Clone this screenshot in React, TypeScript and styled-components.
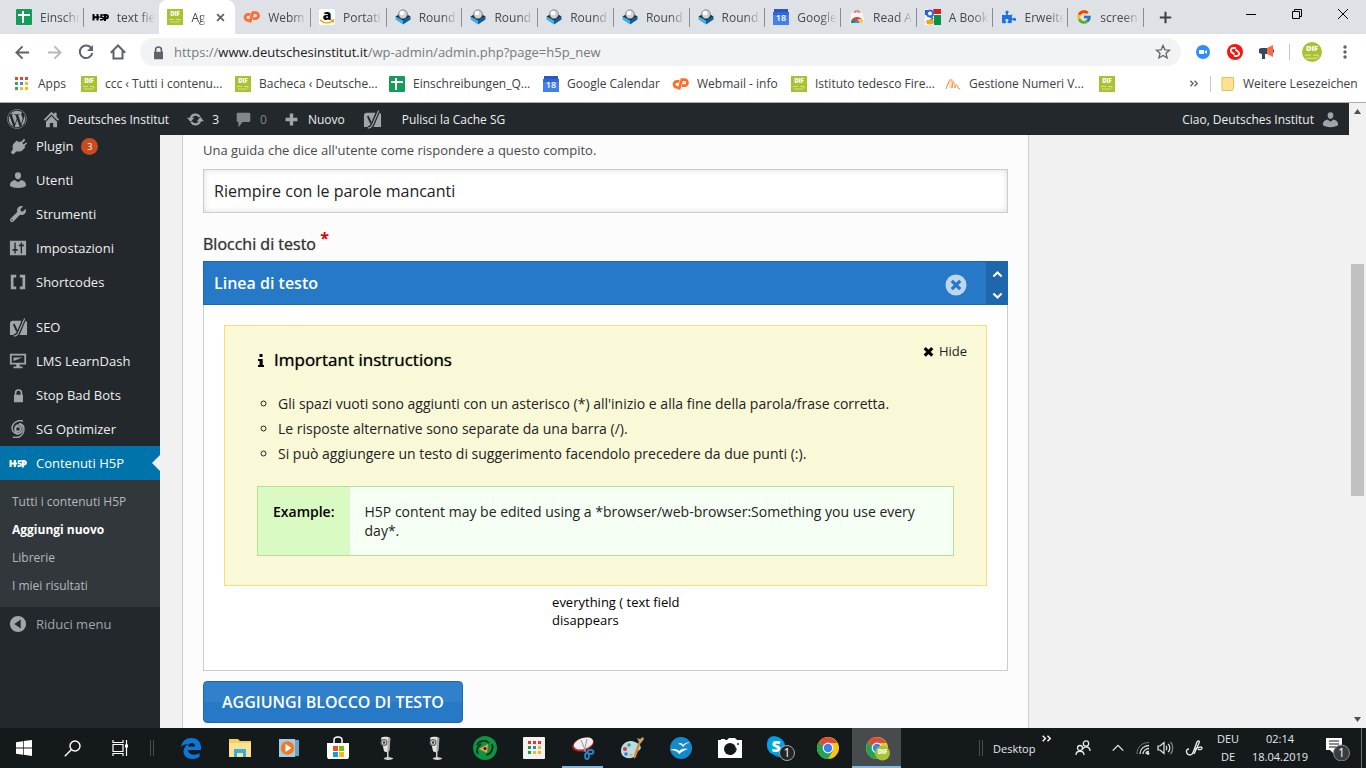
import React from "react";
import styled, { createGlobalStyle, css } from "styled-components";
import { FaWordpress, FaWrench, FaPuzzlePiece } from "react-icons/fa";
import { FcGoogle } from "react-icons/fc";

const ui = `"Open Sans", "Noto Sans", sans-serif`;

const GlobalStyle = createGlobalStyle`
  * { box-sizing: border-box; }
  body { margin: 0; font-family: ${ui}; font-size: 12px; overflow: hidden; }
  button { font: inherit; color: inherit; background: none; border: 0; padding: 0; cursor: pointer; }
  a { color: inherit; text-decoration: none; }
  ul { list-style: none; margin: 0; padding: 0; }
  svg { display: block; flex: none; }
`;

/* ---------- icons ---------- */

const Dif = ({ size = 16, round = false }: { size?: number; round?: boolean }) => (
  <svg width={size} height={size} viewBox="0 0 16 16">
    {round ? <circle cx="8" cy="8" r="8" fill="#a9c22f" /> : <rect width="16" height="16" fill="#a9c22f" />}
    <text x="8" y="7" textAnchor="middle" fontSize="6" fontWeight="800" fill="#fff" fontFamily="Open Sans, sans-serif">DIF</text>
    <path d="M2 10.500h5M9 10.500h4v2M3 13h9" stroke="#dfe8ac" strokeWidth=".8" fill="none" />
  </svg>
);

const Sheet = () => (
  <svg width="16" height="16" viewBox="0 0 16 16">
    <rect width="16" height="16" rx="1" fill="#129d58" />
    <path d="M2 6h12M7 2v12" stroke="#fff" strokeWidth="2" />
  </svg>
);

const H5p = ({ color = "#000", width = 17 }: { color?: string; width?: number }) => (
  <svg width={width} height={width / 2} viewBox="0 0 34 17" fill="none" stroke={color} strokeWidth="4">
    <path d="M3 2v13M11 2v13M3 8.500h12" />
    <path d="M24 4h-6v4.500h2c4 0 4 5 0 5h-4" strokeWidth="3" />
    <path d="M26 16V4h2c5 0 5 6.500 0 6.500h-2" strokeWidth="4" />
  </svg>
);

const Cpanel = () => (
  <svg width="17" height="16" viewBox="0 0 17 16" fill="none" stroke="#ff6c2c" strokeWidth="2.700">
    <path d="M7.500 5.300H5a3 3 0 0 0 0 6h1.500" />
    <path d="M7 13.500 9.800 3.700H12.500a3 3 0 0 1 0 6H10" />
  </svg>
);

const Yoast = () => (
  <svg width="19" height="19" viewBox="0 0 20 20" fill="none">
    <path d="M4 3h13a2 2 0 0 1 2 2v13H1V6a3 3 0 0 1 3-3z" fill="#a0a5aa" />
    <path d="M16.500 0 10 15.500c-1 2.500-2.500 3.500-5 3.500" stroke="#23282d" strokeWidth="4" />
    <path d="M5 6.500 8.500 14" stroke="#23282d" strokeWidth="2" />
    <path d="M16.500 .5 10 15.500c-1 2.500-2.500 3.500-5 3.500" stroke="#a0a5aa" strokeWidth="1.200" />
  </svg>
);

const Amazon = () => (
  <svg width="16" height="16" viewBox="0 0 16 16">
    <rect width="16" height="16" rx="2" fill="#fff" />
    <text x="8" y="11" textAnchor="middle" fontSize="14" fontWeight="800" fill="#000" fontFamily="Open Sans, sans-serif">a</text>
    <path d="M1 11c4 3.500 9 3.500 13 .8M12 11.300l2.600-.3-.6 2.700" stroke="#f90" strokeWidth="1.300" fill="none" />
  </svg>
);

const Roundcube = () => (
  <svg width="16" height="16" viewBox="0 0 16 16">
    <path d="M.5 7.500 8 3l7.500 4.500L8 12z" fill="#1d2a33" />
    <path d="M.5 7.500 8 11.500v4L.5 10.500z" fill="#3fb0ea" />
    <path d="M15.500 7.500 8 11.500v4l7.500-5z" fill="#08609c" />
    <circle cx="8" cy="5.300" r="4.400" fill="#cfd3d6" stroke="#6b7175" strokeWidth=".8" />
    <circle cx="7" cy="4" r="2.300" fill="#fff" />
  </svg>
);

const Calendar = () => (
  <svg width="16" height="16" viewBox="0 0 16 16">
    <path d="M1 0h14v4H1z" fill="#2a56c6" />
    <path d="M0 3h16v13H0z" fill="#4280ef" />
    <path d="M0 3h16v3H0z" fill="#3367d6" />
    <text x="8" y="12" textAnchor="middle" fontSize="9" fontWeight="600" fill="#fff" fontFamily="Open Sans, sans-serif">18</text>
  </svg>
);

const WebStore = () => (
  <svg width="16" height="16" viewBox="0 0 16 16">
    <path d="M2 4h12l1 10H1z" fill="#f4f4f4" />
    <path d="M6 4V2h4v2" stroke="#e44" fill="none" />
    <path d="M2 14c0-8 12-8 12 0z" fill="#db4437" />
    <path d="M2 14c0-2 .5-3 1.500-4L7 14z" fill="#0f9d58" />
    <path d="M14 14c0-2-.5-3-1.500-4H9l-1 4z" fill="#ffcd40" />
    <path d="M5.500 14c0-4 5-4 5 0z" fill="#4285f4" />
  </svg>
);

const OldGoogle = () => (
  <svg width="16" height="16" viewBox="0 0 16 16">
    <rect width="16" height="16" rx="1" fill="#fff" />
    <path d="M8 0h8v5H9z" fill="#e11b1b" />
    <path d="M9 6h7v10H9z" fill="#079247" />
    <path d="M0 1h4v5H0z" fill="#1c5ad4" />
    <circle cx="5" cy="4.500" r="3" fill="#fff" stroke="#2a66dd" strokeWidth="2" />
    <path d="M5 8c4 1 3 3 0 3" stroke="#2a66dd" fill="none" strokeWidth="1.500" />
    <ellipse cx="5" cy="13" rx="4" ry="2.500" fill="#f2a713" />
  </svg>
);

const AppsGrid = () => (
  <svg width="13" height="13" viewBox="0 0 13 13">
    {["#ea4335", "#ea4335", "#ea4335", "#34a853", "#4285f4", "#fbbc05", "#34a853", "#fbbc05", "#fbbc05"].map((c, i) => (
      <rect key={i} x={(i % 3) * 5} y={Math.floor(i / 3) * 5} width="3" height="3" fill={c} />
    ))}
  </svg>
);

const Gestione = () => (
  <svg width="16" height="16" viewBox="0 0 16 16" fill="none" stroke="#f08c2e" strokeWidth="1">
    <path d="M1 13 4 5c2-3 4-1 3 7 0-6 3-8 3 0 0-3 3-5 3 0l2 1" />
    <path d="M5 12V5c0-2 3-2 4 1" stroke="#f6c08c" />
  </svg>
);

const Stroke = ({ d, size = 16, color = "#5f6368", w = 2 }: { d: string; size?: number; color?: string; w?: number }) => (
  <svg width={size} height={size} viewBox="0 0 16 16" fill="none" stroke={color} strokeWidth={w}>
    <path d={d} />
  </svg>
);

const Solid = ({ d, size = 18, color = "#a0a5aa", box = 20 }: { d: string; size?: number; color?: string; box?: number }) => (
  <svg width={size} height={size} viewBox={`0 0 ${box} ${box}`} fill={color} fillRule="evenodd">
    <path d={d} />
  </svg>
);

const personPath = "M10 9.300c-2.100 0-3.400-2-3.400-4.300C6.600 2.700 7.900 1.500 10 1.500s3.400 1.200 3.400 3.500c0 2.300-1.300 4.300-3.400 4.300zM1 16.500c0-4 2-5.700 5.500-6.500l3.500 2.500 3.500-2.500c3.500.8 5.500 2.500 5.500 6.500-2 1.700-5 2.500-9 2.500s-7-.8-9-2.500z";
const lockPath = "M4 9h1V6.500a5 5 0 0 1 10 0V9h1v10H4zM7.200 9h5.600V6.500a2.800 2.800 0 0 0-5.600 0z";
const plugPath = "M13 4.500 16.500 1 18 2.500 14.500 6l1.500 1.500L19 5l1 1.500-3 3 1 1.500-3 3c-2 2-5 2.500-7 1.500l-4.500 4L1 17l2.500-4c-1-2.500-.5-5 1.500-7l3-3 1.500 1.500z";

const ChromeLogo = ({ badge = false }: { badge?: boolean }) => (
  <svg width="26" height="26" viewBox="0 0 26 26">
    <circle cx="13" cy="13" r="11" fill="#f8c61b" />
    <path d="M13 13 3.500 7.500A11 11 0 0 0 13 24l5-8.500z" fill="#21a453" />
    <path d="M13 13 3.500 7.500A11 11 0 0 1 22.500 8H13z" fill="#de4b3d" />
    <circle cx="13" cy="13" r="5.400" fill="#f4f4f4" />
    <circle cx="13" cy="13" r="4.200" fill="#3f80ee" />
    {badge && (
      <g>
        <circle cx="18.500" cy="18" r="7.500" fill="#a9c22f" />
        <text x="18.500" y="19" textAnchor="middle" fontSize="6" fontWeight="800" fill="#fff" fontFamily="Open Sans, sans-serif">DIF</text>
      </g>
    )}
  </svg>
);

const Webcam = () => (
  <svg width="24" height="26" viewBox="0 0 24 26">
    <path d="M6 3c3-2 8-1 9 0l-1 13c-2 2-4 1-5 0z" fill="#e3e3e1" />
    <path d="M13 2.500l2.500.5-1 13-2 1z" fill="#aaa" />
    <circle cx="9" cy="7.500" r="3.500" fill="#666" />
    <circle cx="9" cy="7.500" r="2.200" fill="#ddd" />
    <circle cx="9" cy="7.500" r="1.200" fill="#333" />
    <path d="M12 17h1.500v5l4.500 1c1 1-3 2-5 2s-5-1-4-2l3-1z" fill="#d0d0ce" />
  </svg>
);

const taskIcons: Record<string, React.ReactNode> = {
  "Microsoft Edge": (
    <svg width="22" height="22" viewBox="0 0 22 22"><path d="M1 10C2 4 6 1 11.500 1 18 1 21 6 21 10v3H8c.3 5 7 6 11.500 3v4C13 24 3 22 3.500 14 3.700 11 6 8 8.500 7 5 7 2.500 8 1 10zM8 9.500h7c0-5-6.500-4.500-7 0z" fill="#0b78d7" fillRule="evenodd" /></svg>
  ),
  Explorer: (
    <svg width="24" height="22" viewBox="0 0 24 22"><path d="M1 2h9l2 2h11v16H1z" fill="#f3cf61" /><path d="M1 6h22v14H1z" fill="#fde293" /><path d="M6 20v-8h12v8h-3v-4H9v4z" fill="#36aee2" /></svg>
  ),
  "Media Player": (
    <svg width="22" height="20" viewBox="0 0 22 20"><path d="M4 1l17 1v16L4 19z" fill="#6da4c4" /><path d="M1 1h16v18H1z" fill="#a5cce0" /><circle cx="9.500" cy="10" r="6.700" fill="#ef7a24" /><path d="M7.500 6v8l6-4z" fill="#fff" /></svg>
  ),
  Store: (
    <svg width="24" height="24" viewBox="0 0 24 24"><path d="M1 7h22v14l-1 2H2l-1-2z" fill="#fff" /><path d="M8 8V4c0-4 8-4 8 0v4" stroke="#fff" strokeWidth="1.500" fill="none" /><path d="M7 10h5v5H7z" fill="#f25022" /><path d="M13 10h5v5h-5z" fill="#7fba00" /><path d="M7 16h5v5H7z" fill="#00a4ef" /><path d="M13 16h5v5h-5z" fill="#ffb900" /></svg>
  ),
  "Webcam 1": <Webcam />,
  "Webcam 2": <Webcam />,
  Recorder: (
    <svg width="24" height="24" viewBox="0 0 24 24"><circle cx="12" cy="12" r="12" fill="#0d9344" /><path d="M4 9c2-4 8-6 12-2M19 8c2 5-1 10-6 11M5 18c-2-3-1-7 3-10" stroke="#0b2a1a" strokeWidth="1.600" fill="none" /><path d="M6 13 15 8l-1 9z" fill="#f2a33a" /><circle cx="12" cy="12.500" r="1.500" fill="#222" /></svg>
  ),
  Launcher: (
    <svg width="24" height="24" viewBox="0 0 24 24"><rect x="1" y="1" width="22" height="22" rx="1" fill="#f4f2f1" />
      {["#e8332b", "#e8332b", "#e8332b", "#11a05a", "#3377e8", "#f5b521", "#11a05a", "#f5b521", "#f5b521"].map((c, i) => (
        <rect key={i} x={6 + (i % 3) * 5} y={5 + Math.floor(i / 3) * 5} width="3" height="3" fill={c} />
      ))}
    </svg>
  ),
  "Snipping Tool": (
    <svg width="24" height="24" viewBox="0 0 24 24"><ellipse cx="12" cy="8.500" rx="11" ry="6.500" transform="rotate(-18 12 8.500)" fill="#b7242b" /><ellipse cx="12.500" cy="7.500" rx="10" ry="5.500" transform="rotate(-18 12.500 7.500)" fill="#f0eeee" /><path d="M10 4l5 12M16 3l-3 13" stroke="#999" strokeWidth="1" /><g fill="none" stroke="#2484cc" strokeWidth="1.800"><ellipse cx="16" cy="20" rx="2" ry="3" /><ellipse cx="19.500" cy="16" rx="3" ry="2" /></g></svg>
  ),
  Paint: (
    <svg width="24" height="24" viewBox="0 0 24 24"><path d="M1 15C1 7 9 3 15 6c6 2 8 7 3 9-4 1 0 4-4 6-6 3-13 0-13-6z" fill="#b9dbea" /><circle cx="5" cy="13" r="2" fill="#d73b32" /><circle cx="9" cy="9" r="1.800" fill="#4ba74e" /><circle cx="6" cy="18" r="1.800" fill="#2d83c9" /><circle cx="11" cy="19" r="1.500" fill="#f0b52d" /><path d="M19 5l2 1-5 15-2 2v-4z" fill="#d8862b" /><path d="M17 2l3 1 3-2 1 2-3 4-2-1z" fill="#c9a06b" /></svg>
  ),
  OpenOffice: (
    <svg width="24" height="24" viewBox="0 0 24 24"><circle cx="12" cy="12" r="11" fill="#128acb" /><path d="M9 8c3-2 4-1 5 1 2-2 4-3 7-2-4 0-5 2-7 4-1-2-3-3-5-3zM1 14c4-2 7-1 9 1 3-3 6-3 9-2-4 1-6 3-9 5-2-3-5-4-9-4z" fill="#fff" /></svg>
  ),
  Camera: (
    <svg width="24" height="20" viewBox="0 0 24 20"><path d="M0 2h3V1h4v1h2l2-2h6l2 2h5v18H0z" fill="#fff" /><circle cx="12" cy="11" r="6" fill="#14181b" /><path d="M11 16c4 1 8-2 7-6" stroke="#14181b" fill="none" /><circle cx="20" cy="6" r="1" fill="#222" /></svg>
  ),
  Skype: (
    <svg width="32" height="26" viewBox="0 0 32 26"><circle cx="11" cy="8" r="7" fill="#0094d8" /><circle cx="16" cy="15" r="7" fill="#0094d8" /><circle cx="13" cy="11" r="9" fill="#00a3e6" /><text x="13" y="17" textAnchor="middle" fontSize="16" fontWeight="800" fill="#fff" fontFamily="Open Sans, sans-serif">S</text><circle cx="24" cy="18" r="7.500" fill="#222629" stroke="#a5a5a5" /><text x="24" y="22" textAnchor="middle" fontSize="12" fill="#fff" fontFamily="Open Sans, sans-serif">1</text></svg>
  ),
  Chrome: <ChromeLogo />,
  "Chrome DIF": <ChromeLogo badge />,
};

/* ---------- browser ---------- */

const Screen = styled.div`
  display: flex;
  flex-direction: column;
  height: 100vh;
  background: #fff;
`;

const TabStrip = styled.div`
  display: flex;
  flex: none;
  height: 34px;
  padding-left: 8px;
  background: #dee1e6;
`;

const Tabs = styled.div`
  display: flex;
  flex: 0 1 1136px;
  min-width: 0;
`;

const Tab = styled.button<{ $active?: boolean; $divider?: boolean }>`
  display: flex;
  flex: 1 1 0;
  align-items: center;
  gap: 8px;
  min-width: 0;
  padding: 0 4px 0 8px;
  position: relative;
  color: #45494d;
  text-align: left;
  ${(p) => p.$active && css`background: #fff; border-radius: 8px 8px 0 0;`}
  ${(p) => p.$divider && css`
    &::after { content: ""; position: absolute; right: 0; top: 8px; width: 1px; height: 19px; background: #8a8d92; }
  `}
`;

const TabIcon = styled.span`
  display: grid;
  flex: 0 0 16px;
  place-items: center;
`;

const TabClose = styled.span`
  margin-right: 5px;
`;

const TabTitle = styled.span`
  flex: 1;
  min-width: 0;
  overflow: hidden;
  white-space: nowrap;
  mask-image: linear-gradient(to right, #000 60%, transparent);
`;

const NewTab = styled.button`
  display: grid;
  place-items: center;
  width: 42px;
`;

const WindowControls = styled.div`
  display: flex;
  margin-left: auto;
  button { display: grid; place-items: center; width: 46px; padding-bottom: 6px; }
`;

const Toolbar = styled.div`
  display: flex;
  flex: none;
  align-items: center;
  height: 36px;
  padding: 0 6px;
`;

const ToolButton = styled.button<{ $w?: number }>`
  display: grid;
  place-items: center;
  width: ${(p) => p.$w ?? 32}px;
  height: 28px;
`;

const Omnibox = styled.div`
  display: flex;
  flex: 1;
  align-items: center;
  gap: 8px;
  height: 28px;
  margin: 0 6px;
  padding: 0 10px 0 11px;
  border-radius: 14px;
  background: #f1f3f4;
`;

const Url = styled.a`
  flex: 1;
  font-size: 13px;
  line-height: 20px;
  color: #777b80;
  b { font-weight: 400; color: #202124; }
`;

const VLine = styled.span<{ $h?: number; $c?: string }>`
  flex: none;
  width: 1px;
  height: ${(p) => p.$h ?? 16}px;
  background: ${(p) => p.$c ?? "#c4c6c9"};
`;

const Bookmarks = styled.nav`
  display: flex;
  flex: none;
  align-items: center;
  height: 33px;
  padding: 0 9px 5px 15px;
  border-bottom: 1px solid #a9abad;
  color: #3c4043;
`;

const Bookmark = styled.a<{ $w?: number; $gap?: number }>`
  display: flex;
  flex: 0 1 ${(p) => p.$w ?? 154}px;
  align-items: center;
  gap: ${(p) => p.$gap ?? 8}px;
  min-width: 0;
  white-space: nowrap;
`;

const MoreBookmarks = styled.div`
  display: flex;
  align-items: center;
  gap: 10px;
  margin-left: auto;
`;

/* ---------- WordPress ---------- */

const Viewport = styled.div`
  display: flex;
  flex: 1;
  min-height: 0;
`;

const Site = styled.div`
  display: flex;
  flex: 1;
  flex-direction: column;
  min-width: 0;
`;

const AdminBar = styled.header`
  display: flex;
  flex: none;
  align-items: center;
  height: 32px;
  padding: 0 10px 0 7px;
  background: #23282d;
  color: #eee;
`;

const BarItem = styled.a<{ $after?: number; $dim?: boolean }>`
  display: flex;
  align-items: center;
  gap: 8px;
  margin-right: ${(p) => p.$after ?? 18}px;
  white-space: nowrap;
  color: ${(p) => (p.$dim ? "#82878c" : "#eee")};
  svg { color: #a0a5aa; }
  &:last-child { margin: 0 0 0 auto; }
`;

const Body = styled.div`
  display: flex;
  flex: 1;
  min-height: 0;
  overflow: hidden;
  background: #f1f1f1;
`;

const Sidebar = styled.nav`
  flex: 0 0 160px;
  background: #23282d;
  color: #eee;
  font-size: 13px;
`;

const Menu = styled.ul`
  margin-top: -6px;
`;

const MenuLink = styled.a<{ $current?: boolean; $dim?: boolean }>`
  display: flex;
  align-items: center;
  gap: 8px;
  height: 34px;
  padding-left: 8px;
  position: relative;
  color: ${(p) => (p.$dim ? "#a0a5aa" : "#eee")};
  ${(p) => p.$current && css`
    background: #0073aa;
    color: #fff;
    &::after {
      content: "";
      position: absolute;
      right: 0;
      border: 8px solid transparent;
      border-right-color: #f1f1f1;
    }
  `}
`;

const MenuIcon = styled.span`
  display: grid;
  place-items: center;
  width: 20px;
  color: #a0a5aa;
`;

const MenuGap = styled.li`
  height: 11px;
`;

const Count = styled.span`
  width: 17px;
  height: 17px;
  border-radius: 9px;
  background: #ca4a1f;
  color: #fff;
  font-size: 9px;
  line-height: 17px;
  text-align: center;
`;

const SubMenu = styled.ul`
  padding: 8px 12px 7px;
  background: #32373c;
  color: #b4b9be;
  font-size: 12px;
  line-height: 28px;
`;

const SubLink = styled.a<{ $current?: boolean }>`
  ${(p) => p.$current && css`color: #fff; font-weight: 700;`}
`;

const Panel = styled.main`
  flex: 1;
  min-width: 0;
  margin: 0 320px 0 22px;
  padding: 5px 20px 0;
  border: solid #ccc;
  border-width: 0 1px;
  background: #fcfcfc;
  color: #1d1d1d;
`;

const Hint = styled.label`
  display: block;
  font-size: 13px;
  line-height: 20px;
  color: #494949;
`;

const TextInput = styled.input`
  display: block;
  width: 100%;
  height: 44px;
  margin: 9px 0 19px;
  padding: 0 10px;
  border: 1px solid #ccc;
  box-shadow: inset 0 0 6px rgba(0, 0, 0, 0.14);
  background: #fff;
  color: #222;
  font: 16px ${ui};
`;

const FieldLabel = styled.h2`
  margin: 0 0 5px;
  font-size: 16px;
  font-weight: 400;
  line-height: 24px;
  color: #333;
  text-shadow: 0 0 1px #777;
  sup { color: #da0001; font-size: 16px; font-weight: 700; line-height: 0; text-shadow: none; }
`;

const BlockHead = styled.div`
  display: flex;
  align-items: center;
  height: 44px;
  padding-left: 10px;
  border: 1px solid #1f67ad;
  border-right: 0;
  background: #2579c6;
  color: #fff;
  h3 { flex: 1; margin: 0; font-size: 16px; font-weight: 600; }
`;

const RemoveButton = styled.button`
  margin: 4px 19px 0 0;
`;

const Order = styled.div`
  display: flex;
  flex-direction: column;
  justify-content: space-between;
  align-items: center;
  width: 22px;
  height: 100%;
  padding: 7px 0 3px;
  background: #1f67ad;
`;

const BlockBody = styled.div`
  padding: 20px 20px 41px;
  border: 1px solid #ccc;
  border-top: 0;
  background: #fff;
`;

const Notice = styled.section`
  padding: 14px 32px 29px;
  border: 1px solid #ffdc73;
  background: #f9f9d8;
  font-size: 14px;
  color: #222;
`;

const NoticeHead = styled.div`
  display: flex;
  align-items: flex-start;
  margin-right: -13px;
  h4 {
    display: flex;
    flex: 1;
    align-items: center;
    gap: 9px;
    margin: 0;
    padding-top: 8px;
    font-size: 17px;
    font-weight: 400;
    line-height: 24px;
    color: #000;
    text-shadow: 0 0 1px #555;
  }
`;

const HideButton = styled.button`
  display: flex;
  align-items: center;
  gap: 5px;
  font-size: 13px;
  line-height: 22px;
`;

const Rules = styled.ul`
  margin: 19px 0 20px;
  padding-left: 21px;
  list-style: circle;
  line-height: 25px;
`;

const Example = styled.div`
  display: flex;
  border: 1px solid #b7dd97;
  background: #f6fff3;
  line-height: 19px;
`;

const ExampleLabel = styled.div`
  flex: none;
  padding: 15px;
  background: #d9fbc3;
  color: #000;
  font-weight: 600;
`;

const ExampleText = styled.p`
  margin: 0;
  padding: 15px;
`;

const Note = styled.p`
  width: 150px;
  margin: 7px 0 0 43%;
  color: #000;
  font-size: 13px;
  line-height: 18px;
`;

const AddButton = styled.button`
  height: 42px;
  margin-top: 10px;
  padding: 0 18px;
  border: 1px solid #1f67ad;
  border-radius: 4px;
  background: linear-gradient(#3080cb 50%, #2579c6 50%);
  color: #fff;
  font-size: 16px;
  font-weight: 600;
`;

const Scrollbar = styled.div`
  display: flex;
  flex: 0 0 17px;
  flex-direction: column;
  align-items: center;
  justify-content: space-between;
  padding: 6px 0;
  background: #f1f1f1;
`;

const ScrollTrack = styled.div`
  display: grid;
  grid-template-rows: 150fr 231fr 221fr;
  flex: 1;
  width: 13px;
  &::before { content: ""; grid-row: 2; background: #c1c1c1; }
`;

/* ---------- taskbar ---------- */

const Taskbar = styled.footer`
  display: flex;
  flex: none;
  align-items: center;
  height: 40px;
  background: #14191c;
  color: #e8e8e8;
`;

const TaskButton = styled.button<{ $open?: boolean; $active?: boolean; $w?: number }>`
  display: grid;
  place-items: center;
  width: ${(p) => p.$w ?? 49}px;
  height: 40px;
  position: relative;
  ${(p) => p.$active && css`background: #484b4e;`}
  ${(p) => (p.$open || p.$active) && css`
    &::after {
      content: "";
      position: absolute;
      bottom: 0;
      left: ${p.$active ? 0 : 4}px;
      right: ${p.$active ? 0 : 4}px;
      height: 2px;
      background: #76b9ed;
    }
  `}
`;

const Grip = styled.span<{ $m: string }>`
  width: 4px;
  height: 16px;
  margin: ${(p) => p.$m};
  border: solid #4a4d50;
  border-width: 0 1px;
`;

const Tray = styled.div`
  display: flex;
  flex: none;
  align-items: center;
  height: 100%;
  margin-left: auto;
  font-size: 11px;
`;

const DesktopLabel = styled.button`
  display: flex;
  gap: 7px;
  width: 70px;
  svg { margin-top: -8px; }
`;

const TrayText = styled.div<{ $w: number }>`
  width: ${(p) => p.$w}px;
  line-height: 18px;
  text-align: center;
`;

/* ---------- data ---------- */

const tabs: { icon: React.ReactNode; title: string; active?: boolean }[] = [
  { icon: <Sheet />, title: "Einschr" },
  { icon: <H5p />, title: "text fie" },
  { icon: <Dif />, title: "Ag", active: true },
  { icon: <Cpanel />, title: "Webm" },
  { icon: <Amazon />, title: "Portati" },
  { icon: <Roundcube />, title: "Round" },
  { icon: <Roundcube />, title: "Round" },
  { icon: <Roundcube />, title: "Round" },
  { icon: <Roundcube />, title: "Round" },
  { icon: <Roundcube />, title: "Round" },
  { icon: <Calendar />, title: "Google" },
  { icon: <WebStore />, title: "Read A" },
  { icon: <OldGoogle />, title: "A Book" },
  { icon: <FaPuzzlePiece size={14} color="#1a73e8" />, title: "Erweite" },
  { icon: <FcGoogle size={16} />, title: "screen" },
];

const bookmarks: { icon: React.ReactNode; title: string; w?: number; gap?: number }[] = [
  { icon: <AppsGrid />, title: "Apps", w: 66, gap: 10 },
  { icon: <Dif />, title: "ccc ‹ Tutti i contenu..." },
  { icon: <Dif />, title: "Bacheca ‹ Deutsche..." },
  { icon: <Sheet />, title: "Einschreibungen_Q..." },
  { icon: <Calendar />, title: "Google Calendar", w: 129 },
  { icon: <Cpanel />, title: "Webmail - info", w: 119 },
  { icon: <Dif />, title: "Istituto tedesco Fire..." },
  { icon: <Gestione />, title: "Gestione Numeri V..." },
  { icon: <Dif />, title: "", w: 16 },
];

const menuTop = [
  { icon: <Solid d={plugPath} size={17} />, label: "Plugin", count: 3 },
  { icon: <Solid d={personPath} />, label: "Utenti" },
  { icon: <FaWrench size={16} />, label: "Strumenti" },
  { icon: <Solid d="M1 2h18v16H1zM6 4v7H4v2h2v3h1.500v-3h2v-2h-2V4zM13 4v2h-2v2h2v8h1.500V8h2V6h-2V4z" />, label: "Impostazioni" },
  { icon: <Solid d="M2 2h6v3H5v10h3v3H2zM12 2h6v16h-6v-3h3V5h-3z" />, label: "Shortcodes" },
];

const menuBottom = [
  { icon: <Yoast />, label: "SEO" },
  { icon: <Solid d="M1 2h18v12h-7v2h3v2H5v-2h3v-2H1zM3 4v8h14V4zM5 6h10L5 10z" />, label: "LMS LearnDash" },
  { icon: <Solid d={lockPath} size={15} />, label: "Stop Bad Bots" },
  {
    icon: (
      <svg width="18" height="18" viewBox="0 0 18 18" fill="none" stroke="#a0a5aa" strokeWidth="1.400">
        <circle cx="9" cy="9" r="2.500" />
        <path d="M14 1C8-1 3 4 3 8c0 3 2 5 5 6M4 17c6 2 11-2 11-8 0-3-2-5-5-5.500M12 12c-3 3-7 0-6-4s6-4 7-1c1 4-1 8-6 7" />
      </svg>
    ),
    label: "SG Optimizer",
  },
];

const rules = [
  "Gli spazi vuoti sono aggiunti con un asterisco (*) all'inizio e alla fine della parola/frase corretta.",
  "Le risposte alternative sono separate da una barra (/).",
  "Si può aggiungere un testo di suggerimento facendolo precedere da due punti (:).",
];

/* ---------- page ---------- */

const Browser = () => (
  <>
    <TabStrip>
      <Tabs>
        {tabs.map((t, i) => (
          <Tab key={i} $active={t.active} $divider={i !== 1 && i !== 2}>
            <TabIcon>{t.icon}</TabIcon>
            <TabTitle>{t.title}</TabTitle>
            {t.active && <TabClose><Stroke d="M3 3l10 10M13 3 3 13" size={11} w={2.500} /></TabClose>}
          </Tab>
        ))}
      </Tabs>
      <NewTab aria-label="New tab"><Stroke d="M8 1v14M1 8h14" size={13} color="#3c4043" w={2.500} /></NewTab>
      <WindowControls>
        <button aria-label="Minimize"><Stroke d="M3 8.500h10" color="#000" w={1} /></button>
        <button aria-label="Restore"><Stroke d="M3.500 5.500h7v7h-7zM5.500 5V3.500h7v7H11" color="#000" w={1} /></button>
        <button aria-label="Close"><Stroke d="M3 3l10 10M13 3 3 13" color="#000" w={1} /></button>
      </WindowControls>
    </TabStrip>
    <Toolbar>
      <ToolButton aria-label="Back"><Stroke d="M15 8H2M8 1.500 1.500 8 8 14.500" size={15} /></ToolButton>
      <ToolButton aria-label="Forward"><Stroke d="M1 8h13M8 1.500 14.500 8 8 14.500" size={15} color="#b8babd" /></ToolButton>
      <ToolButton aria-label="Reload">
        <svg width="16" height="16" viewBox="0 0 16 16"><path d="M13.500 4.500A6.300 6.300 0 1 0 14.300 9" fill="none" stroke="#5f6368" strokeWidth="2" /><path d="M15 1v6H9z" fill="#5f6368" /></svg>
      </ToolButton>
      <ToolButton aria-label="Home"><Stroke d="M.8 8.700 8 1.500l7.200 7.200M3.500 7v7.500h9V7" /></ToolButton>
      <Omnibox>
        <Solid d={lockPath} size={15} color="#5f6368" />
        <Url href="#">https://<b>www.deutschesinstitut.it</b>/wp-admin/admin.php?page=h5p_new</Url>
        <Stroke d="M8 1.500l1.900 4.300 4.700.4-3.600 3.100 1.100 4.700L8 11.500 3.900 14 5 9.300 1.400 6.200l4.700-.4z" w={1.300} />
      </Omnibox>
      <ToolButton aria-label="Zoom">
        <svg width="14" height="14" viewBox="0 0 14 14"><circle cx="7" cy="7" r="7" fill="#2d8cff" /><path d="M3 5h5v4H3zM8.700 6.500 11 5v4L8.700 7.500z" fill="#fff" /></svg>
      </ToolButton>
      <ToolButton aria-label="Sync">
        <svg width="16" height="16" viewBox="0 0 16 16"><circle cx="8" cy="8" r="8" fill="#f5160c" /><path d="M9 4H6.500C3.500 4 3 7 5 8.500l2.500 2M7 12h2.500c3 0 3.500-3 1.500-4.500L8.500 5.500" stroke="#fff" strokeWidth="1.800" fill="none" /></svg>
      </ToolButton>
      <ToolButton aria-label="Announcements">
        <svg width="16" height="16" viewBox="0 0 16 16"><path d="M0 5l2-1h7v6H6v5H3v-5L0 9z" fill="#34495e" /><path d="M8 4l6-3v12L8 10z" fill="#fb6a41" /><path d="M14.500 5.500v3" stroke="#34495e" /></svg>
      </ToolButton>
      <ToolButton as="span" $w={12}><VLine /></ToolButton>
      <ToolButton aria-label="Profile" $w={34}><Dif size={20} round /></ToolButton>
      <ToolButton aria-label="Menu" $w={31}>
        <svg width="4" height="14" viewBox="0 0 4 14" fill="#5f6368"><circle cx="2" cy="2" r="1.700" /><circle cx="2" cy="7" r="1.700" /><circle cx="2" cy="12" r="1.700" /></svg>
      </ToolButton>
    </Toolbar>
    <Bookmarks>
      {bookmarks.map((b, i) => (
        <Bookmark key={i} href="#" $w={b.w} $gap={b.gap}>{b.icon}{b.title}</Bookmark>
      ))}
      <MoreBookmarks>
        <Stroke d="M2 4l4 4-4 4M8 4l4 4-4 4" size={11} w={2} />
        <VLine />
        <Bookmark href="#" $w={136}>
          <svg width="14" height="14" viewBox="0 0 14 14"><path d="M1 .5h11.500v10l-1 3H1z" fill="#fde293" stroke="#e8c14b" /></svg>
          Weitere Lesezeichen
        </Bookmark>
      </MoreBookmarks>
    </Bookmarks>
  </>
);

const WpBar = () => (
  <AdminBar>
    <BarItem href="#" aria-label="WordPress" $after={16}><FaWordpress size={20} /></BarItem>
    <BarItem href="#"><Solid d="M10 1 1 10l1.500 1.500L10 4l7.500 7.500L19 10l-3-3V2h-3v2zM10 6l6.500 6.500V19H12v-5H8v5H3.500v-6.500z" size={17} />Deutsches Institut</BarItem>
    <BarItem href="#" $after={16}>
      <svg width="17" height="17" viewBox="0 0 20 20"><path d="M4.500 9A5.700 5.700 0 0 1 15 7M15.500 11A5.700 5.700 0 0 1 5 13" stroke="#a0a5aa" strokeWidth="2.600" fill="none" /><path d="M0 8h8.500L4.200 13zM20 12h-8.500l4.300-5z" fill="#a0a5aa" /></svg>
      3
    </BarItem>
    <BarItem href="#" $dim $after={16}><Solid d="M3 2h14l1 1v9l-1 1H9l-5 6v-6H3l-1-1V3z" size={17} color="#82878c" />0</BarItem>
    <BarItem href="#"><Solid d="M8 3h4v5h5v4h-5v5H8v-5H3V8h5z" size={17} />Nuovo</BarItem>
    <BarItem href="#" aria-label="Yoast SEO" $after={20}><Yoast /></BarItem>
    <BarItem href="#">Pulisci la Cache SG</BarItem>
    <BarItem href="#">Ciao, Deutsches Institut<Solid d={personPath} size={17} /></BarItem>
  </AdminBar>
);

const WpMenu = () => (
  <Sidebar>
    <Menu>
      {menuTop.map((m) => (
        <li key={m.label}>
          <MenuLink href="#"><MenuIcon>{m.icon}</MenuIcon>{m.label}{m.count && <Count>{m.count}</Count>}</MenuLink>
        </li>
      ))}
      <MenuGap />
      {menuBottom.map((m) => (
        <li key={m.label}><MenuLink href="#"><MenuIcon>{m.icon}</MenuIcon>{m.label}</MenuLink></li>
      ))}
      <li>
        <MenuLink href="#" $current><MenuIcon><H5p color="#fff" width={18} /></MenuIcon>Contenuti H5P</MenuLink>
        <SubMenu>
          <li><SubLink href="#">Tutti i contenuti H5P</SubLink></li>
          <li><SubLink href="#" $current>Aggiungi nuovo</SubLink></li>
          <li><SubLink href="#">Librerie</SubLink></li>
          <li><SubLink href="#">I miei risultati</SubLink></li>
        </SubMenu>
      </li>
      <li>
        <MenuLink href="#" $dim>
          <MenuIcon><Solid d="M10 1a9 9 0 1 1 0 18 9 9 0 0 1 0-18zM13 5 6 10l7 5z" /></MenuIcon>Riduci menu
        </MenuLink>
      </li>
    </Menu>
  </Sidebar>
);

const Editor = () => (
  <Panel>
    <Hint htmlFor="task">Una guida che dice all'utente come rispondere a questo compito.</Hint>
    <TextInput id="task" defaultValue="Riempire con le parole mancanti" />
    <FieldLabel>Blocchi di testo <sup>*</sup></FieldLabel>
    <BlockHead>
      <h3>Linea di testo</h3>
      <RemoveButton aria-label="Rimuovi">
        <svg width="22" height="22" viewBox="0 0 22 22"><circle cx="11" cy="11" r="10.500" fill="#bdd6ee" /><path d="M6.800 6.800l8.400 8.400M15.200 6.800l-8.400 8.400" stroke="#2579c6" strokeWidth="3.200" /></svg>
      </RemoveButton>
      <Order>
        <button aria-label="Su"><Stroke d="M2 11l6-6 6 6" size={11} color="#fff" w={3} /></button>
        <button aria-label="Giù"><Stroke d="M2 5l6 6 6-6" size={11} color="#fff" w={3} /></button>
      </Order>
    </BlockHead>
    <BlockBody>
      <Notice>
        <NoticeHead>
          <h4>
            <svg width="8" height="13" viewBox="0 0 8 13"><path d="M2.500 0h3v3h-3zM1 5h4.700v6H7v2H1v-2h1.500V7H1z" /></svg>
            Important instructions
          </h4>
          <HideButton><Stroke d="M2.500 3l11 11M13.500 3l-11 11" size={11} color="#000" w={4.500} />Hide</HideButton>
        </NoticeHead>
        <Rules>{rules.map((r) => <li key={r}>{r}</li>)}</Rules>
        <Example>
          <ExampleLabel>Example:</ExampleLabel>
          <ExampleText>H5P content may be edited using a *browser/web-browser:Something you use every day*.</ExampleText>
        </Example>
      </Notice>
      <Note>everything ( text field disappears</Note>
    </BlockBody>
    <AddButton>AGGIUNGI BLOCCO DI TESTO</AddButton>
  </Panel>
);

const Windows = () => (
  <Taskbar>
    <TaskButton $w={48} aria-label="Start">
      <svg width="16" height="16" viewBox="0 0 16 16" fill="#fff"><path d="M0 2.200 7 1.200V7.600H0zM7.700 1.100 16 0v7.600H7.700zM0 8.400h7v6.400l-7-1zM7.700 8.400H16V16l-8.300-1.200z" /></svg>
    </TaskButton>
    <TaskButton $w={48} aria-label="Search">
      <svg width="17" height="17" viewBox="0 0 17 17" fill="none" stroke="#fff" strokeWidth="1.400"><circle cx="11" cy="6" r="5" /><path d="M7.500 9.500.8 16.200" /></svg>
    </TaskButton>
    <TaskButton $w={48} aria-label="Task view">
      <svg width="17" height="16" viewBox="0 0 17 16" fill="none" stroke="#fff" strokeWidth="1.200"><path d="M1 0v2.500h10V0M1 4.500h10v7H1zM1 16v-2.500h10V16M14.500 0v16" /><path d="M13 4.500h3v3h-3z" fill="#fff" stroke="none" /></svg>
    </TaskButton>
    <Grip $m="0 12px 0 6px" />
    {Object.entries(taskIcons).map(([name, icon]) => (
      <TaskButton key={name} aria-label={name} $open={name === "Snipping Tool"} $active={name === "Chrome DIF"}>{icon}</TaskButton>
    ))}
    <Tray>
      <Grip $m="0 10px 0 0" />
      <DesktopLabel>Desktop<Stroke d="M1 4l4 4-4 4M8 4l4 4-4 4" size={11} color="#fff" w={2} /></DesktopLabel>
      <TaskButton $w={40} aria-label="People">
        <svg width="16" height="16" viewBox="0 0 16 16" fill="none" stroke="#e8e8e8" strokeWidth="1.300"><circle cx="5" cy="8" r="2.500" /><path d="M1 15c0-5 8-5 8 0" /><circle cx="11" cy="3.500" r="2.700" /><path d="M8 9c1-3 7-3 7 2" /></svg>
      </TaskButton>
      <TaskButton $w={30} aria-label="Hidden icons"><Stroke d="M2 11l6-6 6 6" size={14} color="#e8e8e8" w={1.500} /></TaskButton>
      <TaskButton $w={20} aria-label="Network">
        <svg width="14" height="14" viewBox="0 0 14 14" fill="none" stroke="#ddd"><path d="M1 13C1 6 6 1.500 13 1.500" stroke="#777" /><path d="M4 13c0-5 4-8.500 9-8.500M7 13c0-3 3-5.500 6-5.500M10 13c0-1.500 1.500-2.500 3-2.500" strokeWidth="1.300" /><circle cx="12" cy="12.500" r="1" fill="#fff" /></svg>
      </TaskButton>
      <TaskButton $w={24} aria-label="Volume">
        <svg width="17" height="14" viewBox="0 0 17 14" fill="none" stroke="#e8e8e8" strokeWidth="1.200"><path d="M1 5h2l4-3.500v11L3 9H1zM9 5c1 1 1 3 0 4M11 3c2.500 2 2.500 6 0 8" /><path d="M13.500 1c3 3 3 9 0 12" stroke="#888" /></svg>
      </TaskButton>
      <TaskButton $w={34} aria-label="Ink">
        <svg width="18" height="16" viewBox="0 0 18 16" fill="none" stroke="#e8e8e8" strokeWidth="1.400"><path d="M4 9c-4 0-3 6 1 6 3 0 3-3 4-5L12 2c1-2 3-1 2 1L9 14M9 10c4-3 8-4 8-2s-3 2-4 1" /></svg>
      </TaskButton>
      <TrayText $w={34}>DEU<br />DE</TrayText>
      <TrayText $w={70}>02:14<br />18.04.2019</TrayText>
      <TaskButton $w={46} aria-label="Notifications">
        <svg width="26" height="26" viewBox="0 0 26 26"><path d="M1 3h16v12H9v4l-4-4H1z" fill="#fff" /><path d="M4 6h10M4 9h10M4 12h7" stroke="#14191c" /><circle cx="16.500" cy="18" r="8" fill="#3a3d3f" stroke="#8b8b8b" /><text x="16.500" y="22" textAnchor="middle" fontSize="12" fill="#fff" fontFamily="Open Sans, sans-serif">1</text></svg>
      </TaskButton>
      <VLine $h={40} $c="#6a6d70" />
      <TaskButton $w={4} aria-label="Show desktop" />
    </Tray>
  </Taskbar>
);

export default function App() {
  return (
    <Screen>
      <GlobalStyle />
      <Browser />
      <Viewport>
        <Site>
          <WpBar />
          <Body>
            <WpMenu />
            <Editor />
          </Body>
        </Site>
        <Scrollbar>
          <svg width="7" height="5" viewBox="0 0 7 5"><path d="M0 5 3.500 0 7 5z" fill="#505050" /></svg>
          <ScrollTrack />
          <svg width="7" height="5" viewBox="0 0 7 5"><path d="M0 0l3.500 5L7 0z" fill="#505050" /></svg>
        </Scrollbar>
      </Viewport>
      <Windows />
    </Screen>
  );
}
